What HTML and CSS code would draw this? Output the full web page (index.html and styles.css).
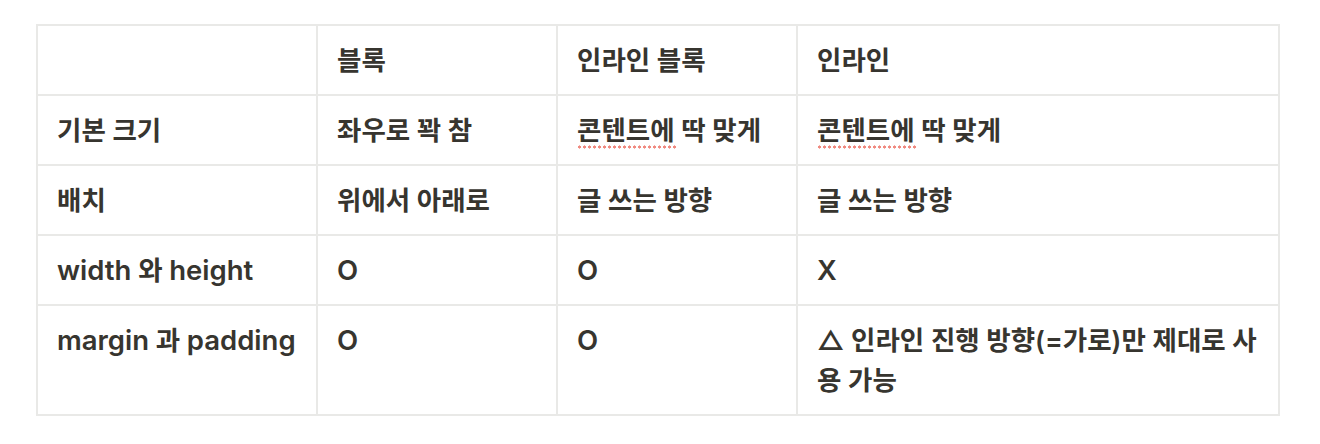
FILE: index.html
```html
<!DOCTYPE html>
<html lang="ko">
<head>
<meta charset="utf-8">
<link rel="stylesheet" href="styles.css">
</head>
<body>
<div class="page">
  <table class="tbl">
    <colgroup>
      <col class="c1"><col class="c2"><col class="c3"><col class="c4">
    </colgroup>
    <tr><td></td><td>블록</td><td>인라인 블록</td><td>인라인</td></tr>
    <tr><td>기본 크기</td><td>좌우로 꽉 참</td><td><span class="spell">콘텐트에</span> 딱 맞게</td><td><span class="spell">콘텐트에</span> 딱 맞게</td></tr>
    <tr><td>배치</td><td>위에서 아래로</td><td>글 쓰는 방향</td><td>글 쓰는 방향</td></tr>
    <tr><td><span class="en">width</span> 와 <span class="en">height</span></td><td><span class="en">O</span></td><td><span class="en">O</span></td><td><span class="en">X</span></td></tr>
    <tr><td><span class="en">margin</span> 과 <span class="en">padding</span></td><td><span class="en">O</span></td><td><span class="en">O</span></td><td>△ 인라인 진행 방향(=가로)만 제대로 사용 가능</td></tr>
  </table>
</div>
</body>
</html>
```
FILE: styles.css
```css
html, body {
  margin: 0;
  padding: 0;
  background: #ffffff;
}
.page {
  padding: 24px 0 0 36px;
}
.tbl {
  border-collapse: collapse;
  table-layout: fixed;
  width: 1242px;
  font-family: Inter, "Noto Sans CJK KR", sans-serif;
  font-size: 26.5px;
  font-weight: 600;
  color: #37352f;
}
.c1 { width: 280px; }
.c2 { width: 240px; }
.c3 { width: 240px; }
.c4 { width: 482px; }
.tbl td {
  border: 2px solid #e9e9e7;
  padding: 14px 19px;
  line-height: 40px;
  height: 40px;
  vertical-align: top;
  word-break: break-all;
}
.en {
  font-size: 27.5px;
}
.spell {
  position: relative;
}
.spell::after {
  content: "";
  position: absolute;
  left: 0;
  right: -2px;
  bottom: -3px;
  height: 4px;
  background-image: radial-gradient(circle, #f08a80 1.4px, transparent 1.7px);
  background-size: 5px 4px;
  background-repeat: repeat-x;
}
```
